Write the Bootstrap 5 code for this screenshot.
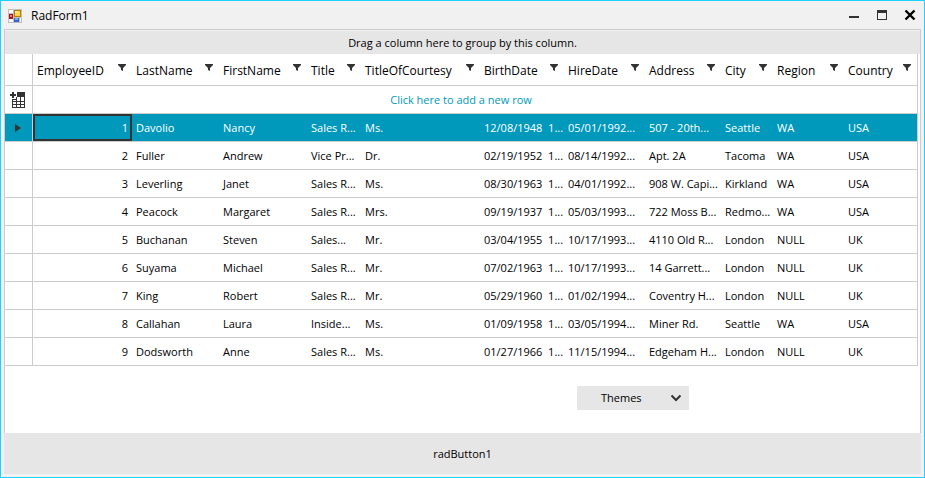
<!DOCTYPE html>
<html lang="en">
<head>
<meta charset="utf-8">
<meta name="viewport" content="width=device-width, initial-scale=1">
<title>RadForm1</title>
<link href="https://cdn.jsdelivr.net/npm/bootstrap@5.3.0/dist/css/bootstrap.min.css" rel="stylesheet">
<style>
  body { font-family: "Open Sans", "Noto Sans", sans-serif; font-size: 11px; line-height: 16px; color: #000; }
  .window { background: #f1f1f1; border: 1px solid #1ad1ff; padding: 0 3px 3px; }
  .title-bar { height: 28px; padding: 2px 0 0 4px; }
  .title-text { font-size: 12px; margin-left: 9px; }
  .caption-btn { width: 28px; height: 24px; }
  .caption-group { margin: -2px -3px 0 auto; }
  .client { border: 1px solid #ccc; border-bottom: 0; }
  .group-panel { height: 24px; background: #e6e6e6; border-top: 1px solid #f1f1f1; }
  .grid-wrap { padding-right: 2px; }
  .grid { table-layout: fixed; border-collapse: separate; border-spacing: 0; border-right: 1px solid #ccc; }
  .grid th, .grid td { height: 28px; padding: 0 4px; border-bottom: 1px solid #ccc; white-space: nowrap; overflow: hidden; vertical-align: middle; }
  .grid thead th { height: 32px; padding: 2px 2px 0 4px; font-size: 12px; font-weight: 400; }
  .grid .row-head { border-right: 1px solid #ccc; padding: 0 1px 0 0; text-align: center; font-weight: 400; }
  .grid .current > * { background: #0099bc; color: #fff; }
  .grid .current-cell { box-shadow: inset 0 0 0 2px #333; }
  .filter-btn { width: 16px; height: 16px; margin-top: -6px; }
  .grid .new-row { padding-right: 32px; }
  .new-row-link { color: #0099bc; text-decoration: none; }
  .themes-btn { width: 112px; height: 24px; margin: 20px 231px 23px auto; padding: 0 7px 0 24px; background: #e6e6e6; }
  .bottom-btn { height: 41px; background: #e6e6e6; }
  .plain-btn { border: 0; border-radius: 0; color: #000; font-size: inherit; line-height: inherit; }
  svg { display: block; flex: none; }
</style>
</head>
<body>
<main class="window d-flex flex-column min-vh-100">
  <header class="title-bar d-flex align-items-center">
    <svg width="14" height="14" viewBox="0 0 14 14" aria-hidden="true" shape-rendering="crispEdges">
      <path fill="#bfbfbf" d="M0 0h14v14H0z"/><path fill="#fafafa" d="M1 1h4v3H1zM1 10h4v3H1zM12 9h1v4h-1z"/>
      <path fill="#a81717" d="M1 5h4v5H1z"/><path fill="#e78378" d="M2 6h2v2H2z"/>
      <path fill="#b98000" d="M6 1h7v7H6z"/><path fill="#ffd34b" d="M7 2h5v5H7z"/><path fill="#fff0a5" d="M7 2h3v2H7z"/>
      <path fill="#3468c8" d="M6 9h5v4H6z"/><path fill="#78a8f5" d="M7 9h3v2H7z"/>
    </svg>
    <h1 class="title-text fw-normal mb-0">RadForm1</h1>
    <div class="caption-group d-flex">
      <button type="button" class="btn plain-btn caption-btn p-0 d-flex align-items-center justify-content-center" aria-label="Minimize"><svg width="12" height="12" viewBox="0 0 12 12"><path fill="#333" d="M1 7h10v2H1z"/></svg></button>
      <button type="button" class="btn plain-btn caption-btn p-0 d-flex align-items-center justify-content-center" aria-label="Maximize"><svg width="12" height="12" viewBox="0 0 12 12"><path fill="#333" fill-rule="evenodd" d="M1 1h10v10H1zM2 4v6h8V4z"/></svg></button>
      <button type="button" class="btn plain-btn caption-btn p-0 d-flex align-items-center justify-content-center" aria-label="Close"><svg width="12" height="12" viewBox="0 0 12 12"><path fill="none" stroke="#000" stroke-width="2.4" d="M1.500 1.500l9 9m0-9l-9 9"/></svg></button>
    </div>
  </header>

  <section class="client bg-white flex-grow-1 d-flex flex-column">
    <div class="group-panel d-flex align-items-center justify-content-center">Drag a column here to group by this column.</div>
    <div class="grid-wrap">
      <table class="grid w-100">
        <colgroup id="gridCols"></colgroup>
        <thead><tr id="gridHead"><th class="row-head"></th></tr></thead>
        <tbody id="gridBody">
          <tr>
            <th class="row-head" scope="row" aria-label="New row">
              <svg class="mx-auto" width="16" height="16" viewBox="0 0 16 16" shape-rendering="crispEdges"><path fill="#333" d="M2 0h2v2h2v2H4v2H2V4H0V2h2zM7 0h8v4H7z"/><path fill="#333" fill-rule="evenodd" d="M2 7h4V5h1V4h8v12H2zM3 8v1h3V8zM7 5v4h3V5zM11 5v4h3V5zM3 10v2h3v-2zM7 10v2h3v-2zM11 10v2h3v-2zM3 13v2h3v-2zM7 13v2h3v-2zM11 13v2h3v-2z"/></svg>
            </th>
            <td colspan="11" class="new-row text-center"><a class="new-row-link" href="#">Click here to add a new row</a></td>
          </tr>
        </tbody>
      </table>
    </div>
    <button type="button" class="btn plain-btn themes-btn d-flex align-items-center justify-content-between" aria-haspopup="true">
      Themes
      <svg width="12" height="8" viewBox="0 0 12 8"><path fill="none" stroke="#333" stroke-width="2" d="M1.500 1.500L6 6l4.500-4.500"/></svg>
    </button>
  </section>
  <button type="button" class="btn plain-btn bottom-btn w-100">radButton1</button>
</main>

<script>
  const columns = [['EmployeeID', 99], ['LastName', 87], ['FirstName', 88], ['Title', 54], ['TitleOfCourtesy', 119], ['BirthDate', 84], ['HireDate', 81], ['Address', 76], ['City', 52], ['Region', 71], ['Country', 73]];
  const rows = [
    ['1', 'Davolio', 'Nancy', 'Sales R...', 'Ms.', '12/08/1948\u00a0 1...', '05/01/1992...', '507 - 20th...', 'Seattle', 'WA', 'USA'],
    ['2', 'Fuller', 'Andrew', 'Vice Pr...', 'Dr.', '02/19/1952\u00a0 1...', '08/14/1992...', 'Apt. 2A', 'Tacoma', 'WA', 'USA'],
    ['3', 'Leverling', 'Janet', 'Sales R...', 'Ms.', '08/30/1963\u00a0 1...', '04/01/1992...', '908 W. Capi...', 'Kirkland', 'WA', 'USA'],
    ['4', 'Peacock', 'Margaret', 'Sales R...', 'Mrs.', '09/19/1937\u00a0 1...', '05/03/1993...', '722 Moss B...', 'Redmo...', 'WA', 'USA'],
    ['5', 'Buchanan', 'Steven', 'Sales...', 'Mr.', '03/04/1955\u00a0 1...', '10/17/1993...', '4110 Old R...', 'London', 'NULL', 'UK'],
    ['6', 'Suyama', 'Michael', 'Sales R...', 'Mr.', '07/02/1963\u00a0 1...', '10/17/1993...', '14 Garrett...', 'London', 'NULL', 'UK'],
    ['7', 'King', 'Robert', 'Sales R...', 'Mr.', '05/29/1960\u00a0 1...', '01/02/1994...', 'Coventry H...', 'London', 'NULL', 'UK'],
    ['8', 'Callahan', 'Laura', 'Inside...', 'Ms.', '01/09/1958\u00a0 1...', '03/05/1994...', 'Miner Rd.', 'Seattle', 'WA', 'USA'],
    ['9', 'Dodsworth', 'Anne', 'Sales R...', 'Ms.', '01/27/1966\u00a0 1...', '11/15/1994...', 'Edgeham H...', 'London', 'NULL', 'UK']
  ];
  const funnel = '<svg width="8" height="8" viewBox="0 0 8 8"><path fill="#333" d="M0 0h8v1L5 4v3L3 6V4L0 1z"/></svg>';
  const arrow = '<svg class="mx-auto" width="6" height="8" viewBox="0 0 6 8"><path fill="#333" d="M0 0l6 4-6 4z"/></svg>';

  document.getElementById('gridCols').innerHTML = [28, ...columns.map(c => c[1])].map(w => `<col style="width:${w}px">`).join('');
  document.getElementById('gridHead').insertAdjacentHTML('beforeend', columns.map(([name]) =>
    `<th scope="col"><div class="d-flex align-items-center justify-content-between"><span>${name}</span><button type="button" class="btn plain-btn filter-btn p-0 d-flex align-items-center justify-content-center" aria-label="Filter ${name}">${funnel}</button></div></th>`).join(''));
  document.getElementById('gridBody').insertAdjacentHTML('beforeend', rows.map((row, r) =>
    `<tr class="${r === 0 ? 'current' : ''}"><th class="row-head" scope="row">${r === 0 ? arrow : ''}</th>${row.map((value, c) =>
      `<td class="${c === 0 ? 'text-end' : ''}${r === 0 && c === 0 ? ' current-cell' : ''}">${value}</td>`).join('')}</tr>`).join(''));
</script>
<script src="https://cdn.jsdelivr.net/npm/bootstrap@5.3.0/dist/js/bootstrap.bundle.min.js"></script>
</body>
</html>
